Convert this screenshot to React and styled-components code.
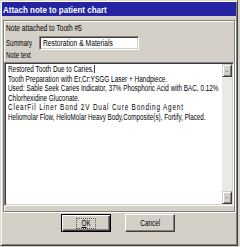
import React from 'react';
import styled, { createGlobalStyle } from 'styled-components';

const GlobalStyle = createGlobalStyle`
  html, body {
    margin: 0;
    padding: 0;
    background: #d4d0c8;
  }
  body {
    font-family: "Liberation Sans", Arial, sans-serif;
    font-size: 8.5px;
    color: #000;
  }
`;

// the dialog font is narrower than anything installed, so text is squeezed
const Narrow = styled.span`
  display: inline-block;
  white-space: nowrap;
  letter-spacing: ${(p) => p.$ls || 0}px;
  transform: scaleX(${(p) => p.$sx || 0.75});
  transform-origin: ${(p) => (p.$center ? 'center' : 'left')} center;
`;

const Window = styled.div`
  box-sizing: border-box;
  width: 238px;
  height: 246px;
  padding: 1px;
  display: flex;
  flex-direction: column;
  background: #d4d0c8;
  border: 1px solid;
  border-color: #dcd9d2 #404040 #404040 #dcd9d2;
  box-shadow: inset 1px 1px #fff, inset -1px -1px #808080;
`;

const TitleBar = styled.div`
  height: 14px;
  display: flex;
  align-items: center;
  padding-left: 1px;
  background: #2424a2;
  color: #fff;
  font-weight: bold;
  font-size: 9.5px;
  overflow: hidden;
`;

const GroupBox = styled.div`
  margin: 4px 1px 0 1px;
  padding: 2px 0 5px 0;
  border: 1px solid #808080;
  box-shadow: inset 1px 1px #fff, 1px 1px #fff;
  display: flex;
  flex-direction: column;
`;

const Label = styled.div`
  height: 10px;
  line-height: 10px;
  padding-left: 2px;
`;

const Row = styled.div`
  display: flex;
  align-items: center;
  margin-top: 3px;
  height: 14px;
`;

const RowLabel = styled.span`
  width: 33px;
  padding-left: 2px;
`;

const Field = styled.div`
  box-sizing: border-box;
  width: 100px;
  height: 14px;
  padding: 1px 0 0 3px;
  line-height: 10px;
  background: #fff;
  border: 1px solid;
  border-color: #808080 #fff #fff #808080;
  box-shadow: inset 1px 1px #404040, inset -1px -1px #d4d0c8;
  overflow: hidden;
`;

const TextArea = styled.div`
  box-sizing: border-box;
  margin-top: 2px;
  height: 144px;
  display: flex;
  background: #fff;
  border: 1px solid;
  border-color: #808080 #fff #fff #808080;
  box-shadow: inset 1px 1px #404040, inset -1px -1px #d4d0c8;
  padding: 1px;
`;

const TextBody = styled.div`
  flex: 1;
  padding: 1px 0 0 2px;
  line-height: 9.6px;
  overflow: hidden;
`;

const Line = styled.div`
  height: 9.6px;
`;

const Caret = styled.span`
  display: inline-block;
  width: 1px;
  height: 8px;
  margin-left: 1px;
  vertical-align: -1px;
  background: #000;
`;

const ScrollBar = styled.div`
  width: 10px;
  display: flex;
  flex-direction: column;
  justify-content: space-between;
  background: #ebe9e4;
`;

const ArrowButton = styled.div`
  box-sizing: border-box;
  height: 13px;
  display: flex;
  align-items: center;
  justify-content: center;
  background: #d4d0c8;
  border: 1px solid;
  border-color: #d4d0c8 #404040 #404040 #d4d0c8;
  box-shadow: inset 1px 1px #fff, inset -1px -1px #808080;

  &::after {
    content: '';
    width: 0;
    height: 0;
    border-left: 2px solid transparent;
    border-right: 2px solid transparent;
    ${(p) => (p.$down ? 'border-top: 2px solid #a0a0a0;' : 'border-bottom: 2px solid #a0a0a0;')}
  }
`;

const ButtonRow = styled.div`
  display: flex;
  justify-content: center;
  gap: 14px;
  margin-top: 2px;
  padding-right: 2px;
`;

const Button = styled.div`
  box-sizing: border-box;
  width: 50px;
  height: 18px;
  display: flex;
  align-items: center;
  justify-content: center;
  background: #d4d0c8;
  border: 1px solid;
  border-color: ${(p) => (p.$default ? '#000' : '#fff #404040 #404040 #fff')};
  box-shadow: ${(p) =>
    p.$default
      ? 'inset 1px 1px #fff, inset -1px -1px #404040, inset -2px -2px #808080'
      : 'inset -1px -1px #808080'};
`;

const FocusRing = styled.span`
  display: inline-block;
  padding: 0 3px;
  line-height: 9px;
  outline: 1px dotted #555;
`;

const Mnemonic = styled.span`
  text-decoration: underline;
`;

const noteLines = [
  { text: 'Tooth Preparation with Er,Cr:YSGG Laser + Handpiece.', sx: 0.76 },
  { text: 'Used:  Sable Seek Caries Indicator, 37% Phosphoric Acid with BAC,  0.12%', sx: 0.75 },
  { text: 'Chlorhexidine Gluconate.', sx: 0.75 },
  { text: 'ClearFil Liner Bond 2V Dual Cure Bonding Agent', sx: 0.75, ls: 1.1 },
  { text: 'Heliomolar Flow, HelioMolar Heavy Body,Composite(s), Fortify, Placed.', sx: 0.74 },
];

export default function App() {
  return (
    <>
      <GlobalStyle />
      <Window>
        <TitleBar>
          <Narrow $sx={0.84}>Attach note to patient chart</Narrow>
        </TitleBar>
        <GroupBox>
          <Label>
            <Narrow $sx={0.78}>Note attached to Tooth #5</Narrow>
          </Label>
          <Row>
            <RowLabel>
              <Narrow $sx={0.72}>Summary</Narrow>
            </RowLabel>
            <Field>
              <Narrow $sx={0.79}>Restoration &amp; Materials</Narrow>
            </Field>
          </Row>
          <Label>
            <Narrow $sx={0.73}>Note text</Narrow>
          </Label>
          <TextArea>
            <TextBody>
              <Line>
                <Narrow>
                  Restored Tooth Due to Caries.
                  <Caret />
                </Narrow>
              </Line>
              {noteLines.map((l) => (
                <Line key={l.text}>
                  <Narrow $sx={l.sx} $ls={l.ls}>
                    {l.text}
                  </Narrow>
                </Line>
              ))}
            </TextBody>
            <ScrollBar>
              <ArrowButton />
              <ArrowButton $down />
            </ScrollBar>
          </TextArea>
        </GroupBox>
        <ButtonRow>
          <Button $default>
            <FocusRing>
              <Narrow $center>
                <Mnemonic>O</Mnemonic>K
              </Narrow>
            </FocusRing>
          </Button>
          <Button>
            <Narrow $center>Cancel</Narrow>
          </Button>
        </ButtonRow>
      </Window>
    </>
  );
}
